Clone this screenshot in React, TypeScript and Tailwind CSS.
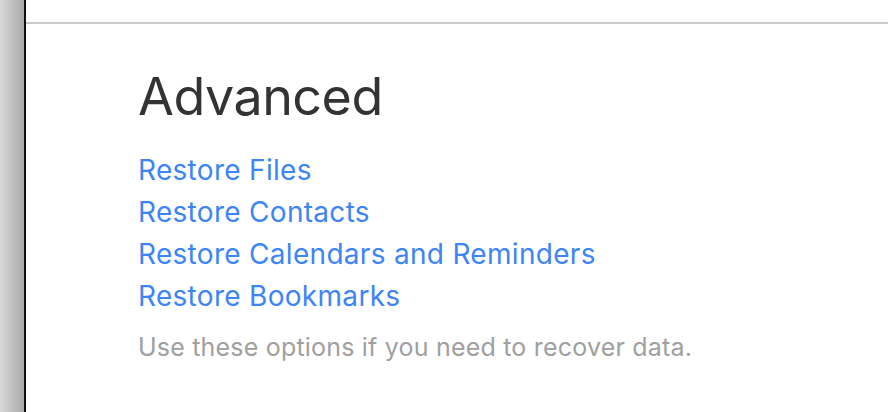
import React from 'react';

const links = [
  'Restore Files',
  'Restore Contacts',
  'Restore Calendars and Reminders',
  'Restore Bookmarks',
];

const App: React.FC = () => {
  return (
    <div className="flex h-[412px] w-[888px] overflow-hidden bg-white" style={{ fontFamily: 'Inter, "Noto Sans", sans-serif' }}>
      <div className="w-[24px] shrink-0 bg-gradient-to-r from-[#dadada] to-[#a9a9a9]" />
      <div className="w-[2px] shrink-0 bg-[#111]" />
      <div className="flex flex-1 flex-col">
        <div className="h-[22px] shrink-0 border-b-2 border-[#c9c9c9] box-content" />
        <div className="flex flex-col pl-[112px] pt-[43px]">
          <h1 className="text-[52px] font-normal leading-[60px] text-[#333] tracking-[-0.5px]">Advanced</h1>
          <div className="mt-[22px] flex flex-col">
            {links.map((l) => (
              <a key={l} href="#" className="text-[28px] leading-[42px] tracking-[0.3px] text-[#3d85f6]">
                {l}
              </a>
            ))}
          </div>
          <p className="mt-[14px] text-[25px] leading-[32px] tracking-[0.2px] text-[#a0a0a0]">Use these options if you need to recover data.</p>
        </div>
      </div>
    </div>
  );
};

export default App;
